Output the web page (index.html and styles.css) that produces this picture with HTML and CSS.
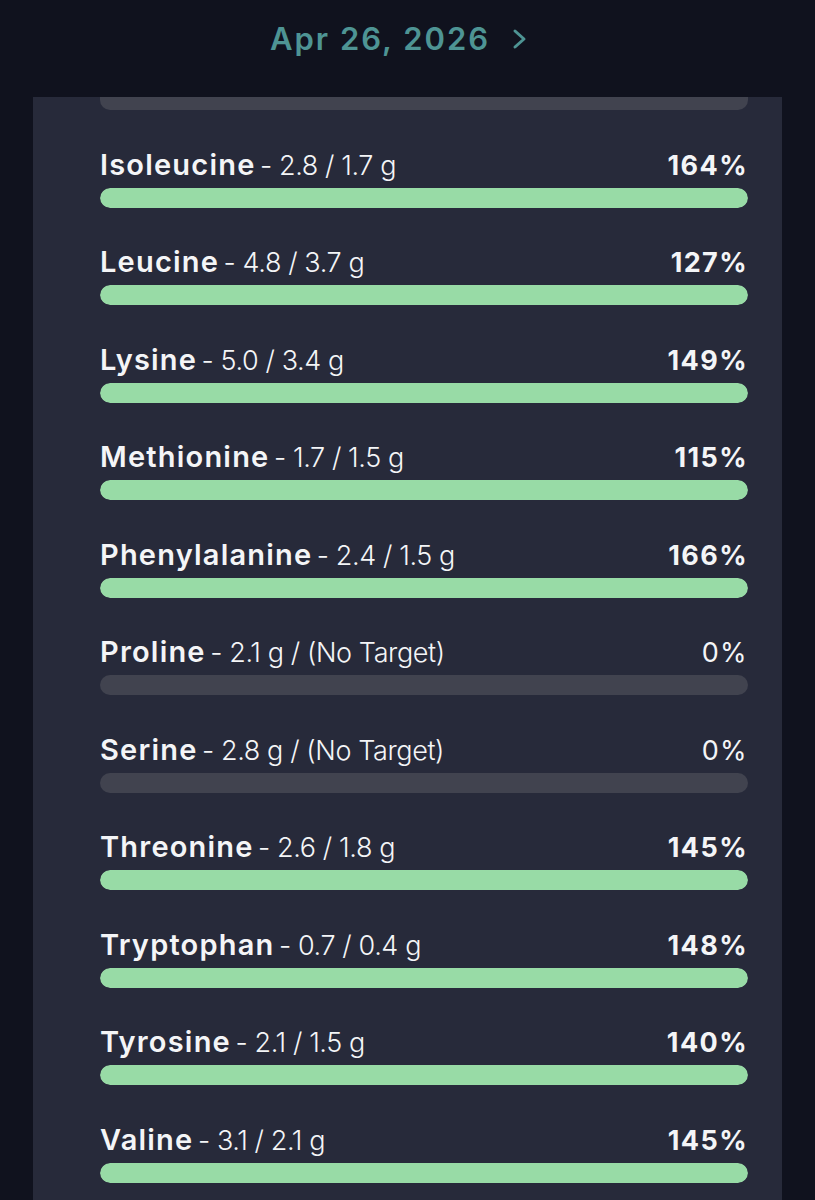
FILE: index.html
```html
<!DOCTYPE html>
<html>
<head>
    <title>Amino Acids</title>
    <link rel="stylesheet" href="styles.css">
</head>
<body>
    <header class="date-bar">
        <div class="date-nav">
            <span class="date-label">Apr 26, 2026</span>
            <svg class="chevron" width="16" height="22" viewBox="0 0 16 22">
                <polyline points="3,3 12,11 3,19" fill="none" stroke="currentColor" stroke-width="3" stroke-linecap="round" stroke-linejoin="round"/>
            </svg>
        </div>
    </header>

    <main class="card">
        <div class="track track-cut"></div>

        <div class="nutrient">
            <div class="nutrient-head">
                <span><b class="name">Isoleucine</b> <span class="amount">- 2.8 / 1.7 g</span></span>
                <span class="pct">164%</span>
            </div>
            <div class="track"><div class="fill" style="width: 100%"></div></div>
        </div>

        <div class="nutrient">
            <div class="nutrient-head">
                <span><b class="name">Leucine</b> <span class="amount">- 4.8 / 3.7 g</span></span>
                <span class="pct">127%</span>
            </div>
            <div class="track"><div class="fill" style="width: 100%"></div></div>
        </div>

        <div class="nutrient">
            <div class="nutrient-head">
                <span><b class="name">Lysine</b> <span class="amount">- 5.0 / 3.4 g</span></span>
                <span class="pct">149%</span>
            </div>
            <div class="track"><div class="fill" style="width: 100%"></div></div>
        </div>

        <div class="nutrient">
            <div class="nutrient-head">
                <span><b class="name">Methionine</b> <span class="amount">- 1.7 / 1.5 g</span></span>
                <span class="pct">115%</span>
            </div>
            <div class="track"><div class="fill" style="width: 100%"></div></div>
        </div>

        <div class="nutrient">
            <div class="nutrient-head">
                <span><b class="name">Phenylalanine</b> <span class="amount">- 2.4 / 1.5 g</span></span>
                <span class="pct">166%</span>
            </div>
            <div class="track"><div class="fill" style="width: 100%"></div></div>
        </div>

        <div class="nutrient">
            <div class="nutrient-head">
                <span><b class="name">Proline</b> <span class="amount">- 2.1 g / (No Target)</span></span>
                <span class="pct pct-none">0%</span>
            </div>
            <div class="track"><div class="fill" style="width: 0%"></div></div>
        </div>

        <div class="nutrient">
            <div class="nutrient-head">
                <span><b class="name">Serine</b> <span class="amount">- 2.8 g / (No Target)</span></span>
                <span class="pct pct-none">0%</span>
            </div>
            <div class="track"><div class="fill" style="width: 0%"></div></div>
        </div>

        <div class="nutrient">
            <div class="nutrient-head">
                <span><b class="name">Threonine</b> <span class="amount">- 2.6 / 1.8 g</span></span>
                <span class="pct">145%</span>
            </div>
            <div class="track"><div class="fill" style="width: 100%"></div></div>
        </div>

        <div class="nutrient">
            <div class="nutrient-head">
                <span><b class="name">Tryptophan</b> <span class="amount">- 0.7 / 0.4 g</span></span>
                <span class="pct">148%</span>
            </div>
            <div class="track"><div class="fill" style="width: 100%"></div></div>
        </div>

        <div class="nutrient">
            <div class="nutrient-head">
                <span><b class="name">Tyrosine</b> <span class="amount">- 2.1 / 1.5 g</span></span>
                <span class="pct">140%</span>
            </div>
            <div class="track"><div class="fill" style="width: 100%"></div></div>
        </div>

        <div class="nutrient">
            <div class="nutrient-head">
                <span><b class="name">Valine</b> <span class="amount">- 3.1 / 2.1 g</span></span>
                <span class="pct">145%</span>
            </div>
            <div class="track"><div class="fill" style="width: 100%"></div></div>
        </div>
    </main>
</body>
</html>
```

FILE: styles.css
```css
body {
    font-family: Inter, "Noto Sans", sans-serif;
    background-color: #10121e;
    color: #f4f5f7;
    margin: 0;
    padding: 0;
    height: 1200px;
    overflow: hidden;
}

.date-bar {
    height: 97px;
    display: flex;
    justify-content: center;
    align-items: center;
    padding-right: 17px;
    padding-bottom: 20px;
    box-sizing: border-box;
}

.date-nav {
    display: flex;
    align-items: center;
    gap: 22px;
    color: #4e9494;
}

.date-label {
    font-size: 31px;
    font-weight: 600;
    letter-spacing: 2px;
}

.card {
    background-color: #272a3a;
    margin: 0 33px;
    padding: 0 34px 40px 67px;
    height: 1103px;
    box-sizing: border-box;
    overflow: hidden;
}

.track {
    height: 20px;
    border-radius: 10px;
    background-color: #41434f;
    overflow: hidden;
}

.track-cut {
    height: 13px;
    border-radius: 0 0 10px 10px;
}

.fill {
    height: 100%;
    background-color: #98dba6;
    border-radius: 10px;
}

.nutrient {
    margin-top: 37.5px;
}

.nutrient-head {
    display: flex;
    justify-content: space-between;
    align-items: baseline;
    height: 34px;
    line-height: 34px;
    margin-bottom: 6px;
}

.name {
    font-size: 29px;
    font-weight: 600;
    letter-spacing: 1.2px;
}

.amount {
    font-size: 27px;
    font-weight: 300;
    letter-spacing: -0.4px;
}

.pct {
    font-size: 27px;
    font-weight: 700;
    letter-spacing: 1.4px;
}

.pct-none {
    font-weight: 400;
}
```
